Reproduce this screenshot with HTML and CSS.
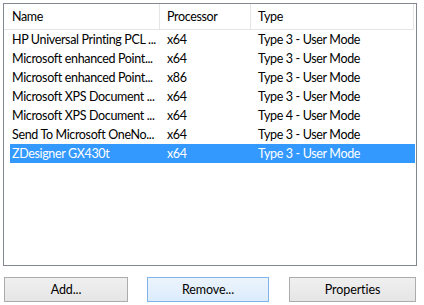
FILE: index.html
```html
<!DOCTYPE html>
<html lang="en">
<head>
    <meta charset="UTF-8">
    <title>Printer Drivers</title>
    <link rel="stylesheet" href="styles.css">
</head>
<body>
    <div class="drivers-panel">
        <div class="driver-list">
            <div class="list-header">
                <div class="header-cell">Name</div>
                <div class="header-cell">Processor</div>
                <div class="header-cell">Type</div>
            </div>
            <div class="list-body">
                <div class="list-row">
                    <span class="cell name">HP Universal Printing PCL ...</span>
                    <span class="cell">x64</span>
                    <span class="cell">Type 3 - User Mode</span>
                </div>
                <div class="list-row">
                    <span class="cell name">Microsoft enhanced Point...</span>
                    <span class="cell">x64</span>
                    <span class="cell">Type 3 - User Mode</span>
                </div>
                <div class="list-row">
                    <span class="cell name">Microsoft enhanced Point...</span>
                    <span class="cell">x86</span>
                    <span class="cell">Type 3 - User Mode</span>
                </div>
                <div class="list-row">
                    <span class="cell name">Microsoft XPS Document ...</span>
                    <span class="cell">x64</span>
                    <span class="cell">Type 3 - User Mode</span>
                </div>
                <div class="list-row">
                    <span class="cell name">Microsoft XPS Document ...</span>
                    <span class="cell">x64</span>
                    <span class="cell">Type 4 - User Mode</span>
                </div>
                <div class="list-row">
                    <span class="cell name">Send To Microsoft OneNo...</span>
                    <span class="cell">x64</span>
                    <span class="cell">Type 3 - User Mode</span>
                </div>
                <div class="list-row selected">
                    <span class="cell name">ZDesigner GX430t</span>
                    <span class="cell">x64</span>
                    <span class="cell">Type 3 - User Mode</span>
                </div>
            </div>
        </div>

        <div class="panel-actions">
            <button class="win-btn add">Add...</button>
            <button class="win-btn remove focused">Remove...</button>
            <button class="win-btn props">Properties</button>
        </div>
    </div>
</body>
</html>
```

FILE: styles.css
```css
* {
    margin: 0;
    padding: 0;
    box-sizing: border-box;
}

body {
    font-family: "Segoe UI", Lato, "Noto Sans", sans-serif;
    font-size: 12.5px;
    letter-spacing: -0.35px;
    color: #000;
    background: #fff;
}

.drivers-panel {
    padding: 3px 7px 0 3px;
}

.driver-list {
    height: 263px;
    border: 1px solid #828790;
    background: #fff;
}

.list-header {
    display: grid;
    grid-template-columns: 156px 91px 163px;
    height: 26px;
}

.header-cell {
    padding-left: 7px;
    line-height: 25px;
    border-right: 1px solid #e5e5e5;
    border-bottom: 1px solid #e5e5e5;
}

.header-cell:first-child {
    padding-left: 8px;
}

.list-row {
    display: grid;
    grid-template-columns: 150px 91px 164px;
    margin-left: 6px;
    width: 405px;
    height: 19px;
    line-height: 19px;
    white-space: nowrap;
}

.cell {
    padding-left: 7px;
}

.cell.name {
    padding-left: 2px;
}

.list-row.selected {
    background: #3399ff;
    color: #fff;
}

.panel-actions {
    display: flex;
    gap: 19px;
    margin-top: 11px;
    padding-left: 1px;
}

.win-btn {
    height: 25px;
    font-family: inherit;
    font-size: 12.5px;
    letter-spacing: -0.1px;
    color: #000;
    border: 1px solid #acacac;
    background: linear-gradient(#f0f0f0, #e5e5e5);
}

.win-btn.add {
    width: 124px;
}

.win-btn.remove {
    width: 122px;
}

.win-btn.props {
    width: 127px;
    margin-left: 1px;
}

.win-btn.focused {
    border-color: #7eb4ea;
    background: linear-gradient(#ecf4fc, #dcecfc);
}
```
